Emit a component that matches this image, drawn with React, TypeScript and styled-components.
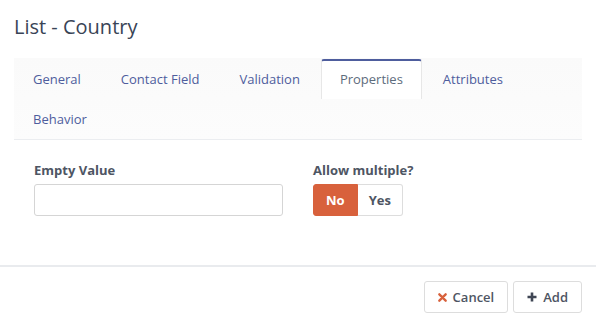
import React, { useState } from "react";
import styled, { createGlobalStyle } from "styled-components";

const GlobalStyle = createGlobalStyle`
  html, body {
    margin: 0;
    padding: 0;
    background: #fff;
  }
  body {
    font-family: "Open Sans", "Liberation Sans", sans-serif;
    font-size: 13px;
    color: #5d6c7c;
  }
  * {
    box-sizing: border-box;
  }
`;

const Modal = styled.div`
  width: 596px;
  height: 329px;
  display: flex;
  flex-direction: column;
  background: #fff;
`;

const Header = styled.div`
  height: 58px;
  padding: 13px 14px 0;
`;

const Title = styled.h4`
  margin: 0;
  font-size: 20px;
  font-weight: 400;
  line-height: 28px;
  color: #394456;
`;

const TabPanel = styled.div`
  margin: 0 14px;
  background: linear-gradient(#fafafa, #fcfcfc);
  border-bottom: 1px solid #ebedf0;
`;

const TabList = styled.ul`
  list-style: none;
  margin: 0;
  padding: 1px 0 0 0;
  display: flex;
  flex-wrap: wrap;
  width: 100%;
`;

const Tab = styled.li<{ $active?: boolean }>`
  height: 40px;
  margin-right: 2px;
  padding: 0 18px 2px;
  display: flex;
  align-items: center;
  font-size: 13px;
  cursor: pointer;
  color: ${(p) => (p.$active ? "#5d6c7c" : "#4e5d9d")};
  background: ${(p) => (p.$active ? "#fff" : "transparent")};
  border: 1px solid ${(p) => (p.$active ? "#e7e7e7" : "transparent")};
  border-top: 2px solid ${(p) => (p.$active ? "#4e5d9d" : "transparent")};
  border-bottom: none;
  border-radius: 3px 3px 0 0;
`;

const Body = styled.div`
  padding: 21px 34px 0;
  display: grid;
  grid-template-columns: 249px auto;
  column-gap: 30px;
  flex: 1;
  align-content: start;
`;

const Field = styled.div`
  display: flex;
  flex-direction: column;
`;

const Label = styled.label`
  font-size: 13px;
  font-weight: 700;
  color: #4e5563;
  line-height: 18px;
  margin-bottom: 5px;
`;

const Input = styled.input`
  height: 32px;
  width: 249px;
  border: 1px solid #d5d5d5;
  border-radius: 3px;
  padding: 6px 10px;
  font-family: inherit;
  font-size: 13px;
  outline: none;
`;

const Toggle = styled.div`
  display: flex;
`;

const ToggleButton = styled.button<{ $on?: boolean; $first?: boolean }>`
  height: 32px;
  padding: 0 ${(p) => (p.$first ? "12px" : "11px")};
  font-family: inherit;
  font-size: 13px;
  font-weight: 700;
  color: ${(p) => (p.$on ? "#fff" : "#4e5563")};
  background: ${(p) => (p.$on ? "#d8613c" : "#fff")};
  border: 1px solid ${(p) => (p.$on ? "#d8613c" : "#ddd")};
  border-radius: ${(p) => (p.$first ? "3px 0 0 3px" : "0 3px 3px 0")};
  ${(p) => (!p.$first ? "border-left: none;" : "")}
  cursor: pointer;
`;

const Footer = styled.div`
  border-top: 2px solid #e9ebee;
  height: 64px;
  padding: 14px 14px 0;
  display: flex;
  justify-content: flex-end;
  align-items: flex-start;
  gap: 5px;
`;

const Button = styled.button`
  height: 32px;
  padding: 0 13px;
  display: flex;
  align-items: center;
  gap: 6px;
  font-family: inherit;
  font-size: 13px;
  font-weight: 600;
  color: #4e5563;
  background: #fff;
  border: 1px solid #ddd;
  border-radius: 3px;
  cursor: pointer;
`;

const TimesIcon = () => (
  <svg width="9" height="9" viewBox="0 0 10 10">
    <path
      d="M1.5 1.5 L8.5 8.5 M8.5 1.5 L1.5 8.5"
      stroke="#d8613c"
      strokeWidth="2.6"
      strokeLinecap="round"
    />
  </svg>
);

const PlusIcon = () => (
  <svg width="10" height="10" viewBox="0 0 10 10">
    <path d="M5 0.5 V9.5 M0.5 5 H9.5" stroke="#3f4654" strokeWidth="2.6" />
  </svg>
);

const tabs = ["General", "Contact Field", "Validation", "Properties", "Attributes", "Behavior"];

export default function App() {
  const [active, setActive] = useState("Properties");
  const [multiple, setMultiple] = useState(false);

  return (
    <Modal>
      <GlobalStyle />
      <Header>
        <Title>List - Country</Title>
      </Header>
      <TabPanel>
        <TabList>
          {tabs.map((t) => (
            <Tab key={t} $active={t === active} onClick={() => setActive(t)}>
              {t}
            </Tab>
          ))}
        </TabList>
      </TabPanel>
      <Body>
        <Field>
          <Label>Empty Value</Label>
          <Input type="text" />
        </Field>
        <Field>
          <Label>Allow multiple?</Label>
          <Toggle>
            <ToggleButton $first $on={!multiple} onClick={() => setMultiple(false)}>
              No
            </ToggleButton>
            <ToggleButton $on={multiple} onClick={() => setMultiple(true)}>
              Yes
            </ToggleButton>
          </Toggle>
        </Field>
      </Body>
      <Footer>
        <Button>
          <TimesIcon />
          Cancel
        </Button>
        <Button>
          <PlusIcon />
          Add
        </Button>
      </Footer>
    </Modal>
  );
}
